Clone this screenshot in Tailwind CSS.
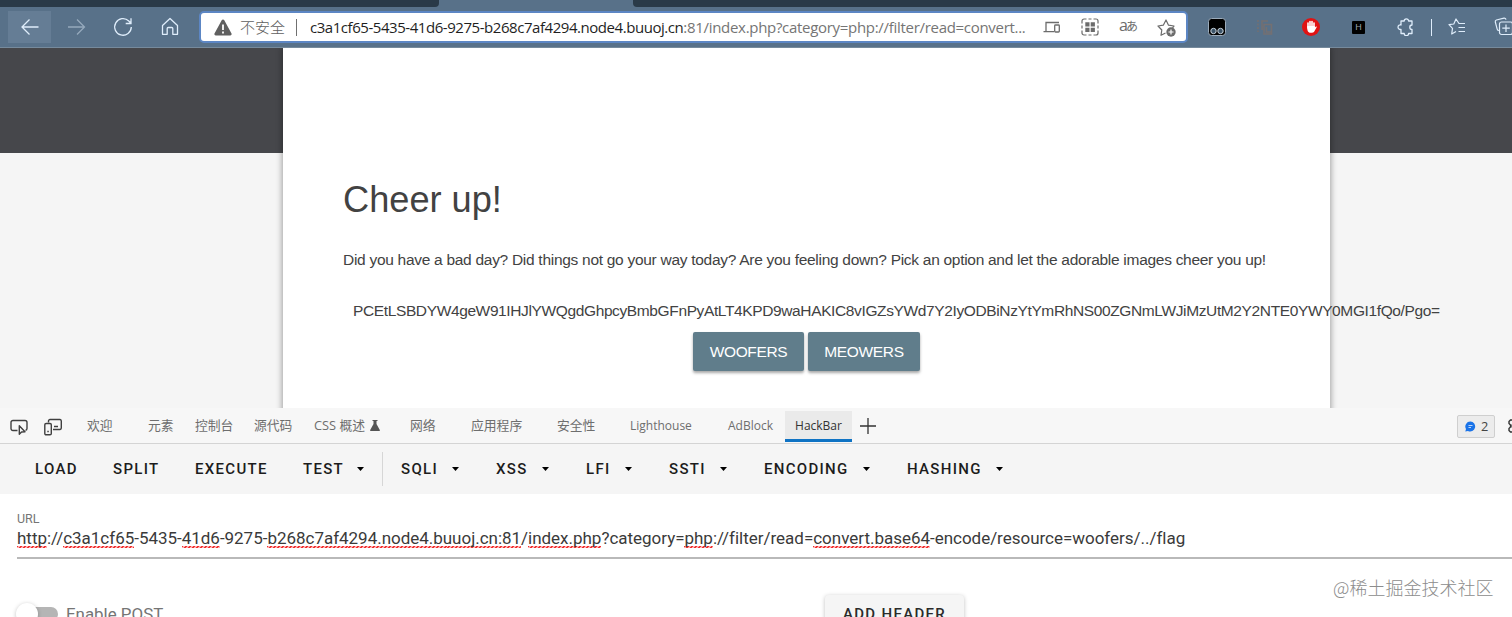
<!DOCTYPE html>
<html lang="zh">
<head>
  <meta charset="UTF-8">
  <meta name="viewport" content="width=device-width, initial-scale=1.0">
  <title>Cheer up!</title>
  <script src="https://cdn.jsdelivr.net/npm/@tailwindcss/browser@4"></script>
</head>
<body class="w-[1512px] h-[617px] overflow-hidden bg-white flex flex-col whitespace-nowrap font-['Liberation_Sans','Noto_Sans_CJK_SC',sans-serif]">

  <!-- browser tab strip -->
  <div class="h-[7px] shrink-0 flex bg-[#587189]">
    <div class="w-[439px] bg-[#2a3a48] rounded-br"></div>
    <div class="w-[194px]"></div>
    <div class="flex-1 bg-[#2a3a48] rounded-bl"></div>
  </div>

  <!-- browser toolbar -->
  <header class="h-[41px] shrink-0 flex items-center *:shrink-0 bg-[#587189] border-b border-[#768a9c] text-[#dfedfb] overflow-hidden">
    <div class="ml-2 w-[43px] h-8 bg-[#657d95] flex items-center justify-center">
      <svg class="w-5 h-5" viewBox="0 0 20 20" fill="none" stroke="currentColor" stroke-width="1.3"><path d="M18.5 10H2M9.5 2.5L2 10l7.500 7.500"/></svg>
    </div>
    <svg class="ml-[16px] w-5 h-5 opacity-45" viewBox="0 0 20 20" fill="none" stroke="currentColor" stroke-width="1.3"><path d="M1 10h16.500M10 2.500l7.500 7.500L10 17.500"/></svg>
    <svg class="ml-[26px] w-5 h-5" viewBox="0 0 20 20" fill="none" stroke="currentColor" stroke-width="1.3"><path d="M18.300 10A8.300 8.300 0 1 1 15.800 4L18 6.300M18 1.200v5.300h-5.300"/></svg>
    <svg class="ml-[27px] w-5 h-5" viewBox="0 0 20 20" fill="none" stroke="currentColor" stroke-width="1.3" stroke-linejoin="round"><path d="M2.500 8.500L10 1.500l7.500 7V17.300h-4.700V11.500a1 1 0 0 0-1-1H8.200a1 1 0 0 0-1 1v5.800H2.500z"/></svg>

    <div class="ml-[19px] w-[989px] h-8 bg-white border-2 border-[#5c86c4] rounded-[5px] flex items-center *:shrink-0 font-['Open_Sans','Noto_Sans_CJK_SC',sans-serif]">
      <svg class="ml-[13px] w-[18px] h-[17px] text-[#606060]" viewBox="0 0 18 17"><path fill="currentColor" d="M7.700 1.200a1.500 1.500 0 0 1 2.600 0l7.200 13.300a1.400 1.400 0 0 1-1.300 2H1.800a1.400 1.400 0 0 1-1.300-2z"/><path stroke="#fff" stroke-width="1.800" d="M9 5.500v5.500M9 12.500v2"/></svg>
      <span class="ml-2 w-[46px] text-[15px] font-light text-[#606060]">不安全</span>
      <span class="ml-[10px] w-px h-[17px] bg-[#707070]"></span>
      <span class="ml-[13px] w-[719px] text-[15px] tracking-[-0.3px] text-[#757575]"><span class="tracking-[-0.45px] text-[#1f1f1f]">c3a1cf65-5435-41d6-9275-b268c7af4294.node4.buuoj.cn</span>:81/index.php?category=php://filter/read=convert...</span>
      <svg class="ml-[14px] w-[18px] h-4 text-[#6c6c6c]" viewBox="0 0 18 16" fill="none" stroke="currentColor" stroke-width="1.300"><path d="M3 12V3.500h13M0.500 12.700h10.500"/><rect x="11.700" y="6" width="4.600" height="7" rx=".8"/></svg>
      <svg class="ml-5 w-[18px] h-[18px] text-[#6c6c6c]" viewBox="0 0 18 18" fill="none" stroke="currentColor" stroke-width="1.200"><path d="M1 5.500V3a2 2 0 0 1 2-2h2.500M12.500 1H15a2 2 0 0 1 2 2v2.500M17 12.500V15a2 2 0 0 1-2 2h-2.500M5.500 17H3a2 2 0 0 1-2-2v-2.500M7.500 1h3M7.500 17h3M1 7.500v3M17 7.500v3"/><path fill="currentColor" stroke="none" d="M4.300 4.300h4.200v4.200H4.300zM9.700 4.300h4.200v4.200H9.700zM4.300 9.700h4.200v4.200H4.300zM9.700 9.700h4.200v4.200H9.700z"/></svg>
      <span class="ml-5 w-5 flex items-center text-[#6c6c6c]"><span class="text-[16px] leading-4 pb-1">a</span><span class="text-[12px] leading-4 -ml-0.5">あ</span></span>
      <svg class="ml-[18px] w-[19px] h-[19px] text-[#6c6c6c]" viewBox="0 0 19 19" fill="none" stroke="currentColor" stroke-width="1.200" stroke-linejoin="round"><path d="M8.500 15L4 17.300l.8-5.300L1 8l5.300-.8L9 2l2.500 5.200L17 8l-1.500 1.800"/><circle cx="14" cy="14" r="4.700" fill="currentColor" stroke="none"/><path stroke="#fff" d="M14 11.500v5M11.500 14h5"/></svg>
    </div>

    <svg class="ml-[20px] w-[18px] h-[18px]" viewBox="0 0 18 18"><rect x=".5" y=".5" width="17" height="17" rx="3" fill="#000" stroke="#9babba"/><g fill="#3c5468" stroke="#c9d3dc"><circle cx="5.500" cy="13" r="2.700"/><circle cx="12.500" cy="13" r="2.700"/></g></svg>
    <svg class="ml-[30px] w-[18px] h-[18px]" viewBox="0 0 18 18" fill="none" stroke="#747072" stroke-width="1.600"><path d="M2 2v12" stroke-dasharray="2 1.500"/><path d="M6 12V3h6M8 6.500h7.500V16H8zM10.500 9v5h5"/></svg>
    <svg class="ml-[28px] w-[18px] h-[18px]" viewBox="0 0 18 18"><circle cx="9" cy="9" r="9" fill="#e01212"/><path d="M6 10V5M8 9V3.500M10 9V3.500M12 10V5" stroke="#fff" stroke-width="1.600" stroke-linecap="round"/><path fill="#fff" d="M5.200 8h7.600v1.500l1.400-1.300.6.800-2.800 5c-.8 1-4.500 1.200-5.600 0-1-1.200-1.300-3-1.200-6z"/></svg>
    <span class="ml-[32px] w-[13px] h-[13px] bg-black rounded-[1px] text-[#9aa3ab] text-[9px] leading-[13px] text-center">H</span>
    <svg class="ml-[32px] w-[18px] h-[18px]" viewBox="0 0 18 18" fill="none" stroke="currentColor" stroke-width="1.300" stroke-linejoin="round"><path d="M4 3h3.200a2.200 2.200 0 0 1 4.400 0H15v4a2 2 0 0 0 0 4.400V15.500h-3.400a2.200 2.200 0 0 1-4.400 0H4v-4.100a2.300 2.300 0 1 1 0-4.400z"/></svg>
    <span class="ml-[16px] w-px h-[17px] bg-[#dfedfb]"></span>
    <svg class="ml-[16px] w-[18px] h-[18px]" viewBox="0 0 18 18" fill="none" stroke="currentColor" stroke-width="1.200" stroke-linejoin="round"><path d="M17 5.500h-6L8 1 5.800 6 1 6.700l3.500 3.600-.8 5.700L8 13.500M10.500 9.500H17M10.500 13.500H17"/></svg>
    <svg class="ml-[28px] w-5 h-5" viewBox="0 0 20 20" fill="none" stroke="currentColor" stroke-width="1.200" stroke-linejoin="round"><path d="M5 13.500c-1 0-1.600-.5-1.800-1.400L1.300 5c-.2-1 .2-1.700 1.100-2L10 1.200c1-.2 1.800.3 2 1.500"/><rect x="5.500" y="5" width="13" height="12.500" rx="2"/><path d="M12 7.500v7.500M8.300 11.200h7.500"/></svg>
  </header>

  <!-- page -->
  <main class="h-[360px] shrink-0 overflow-hidden bg-[linear-gradient(#46474b_105px,#f5f5f5_105px)] text-[#424242]">
    <div class="ml-[283px] w-[1047px] h-[400px] bg-white shadow-[0_0_6px_1px_rgba(0,0,0,0.35)] pl-[60px]">
      <h1 class="pt-[129px] text-[36.2px] leading-[46px]">Cheer up!</h1>
      <p class="mt-[25px] text-[15.5px] leading-6 tracking-[-0.285px]">Did you have a bad day? Did things not go your way today? Are you feeling down? Pick an option and let the adorable images cheer you up!</p>
      <p class="mt-[27px] ml-[10px] text-[15.5px] leading-6 tracking-[-0.375px]">PCEtLSBDYW4geW91IHJlYWQgdGhpcyBmbGFnPyAtLT4KPD9waHAKIC8vIGZsYWd7Y2IyODBiNzYtYmRhNS00ZGNmLWJiMzUtM2Y2NTE0YWY0MGI1fQo/Pgo=</p>
      <div class="mt-[9px] ml-[350px] flex gap-1 text-white text-[15.5px] tracking-[-0.35px]">
        <button class="w-[111px] h-[39px] bg-[#607d8b] rounded-[2px] shadow-[0_2px_3px_rgba(0,0,0,0.35)]">WOOFERS</button>
        <button class="w-[112px] h-[39px] bg-[#607d8b] rounded-[2px] shadow-[0_2px_3px_rgba(0,0,0,0.35)]">MEOWERS</button>
      </div>
    </div>
  </main>

  <!-- devtools tabs -->
  <nav class="h-[36px] shrink-0 flex items-center *:shrink-0 bg-[#f7f7f7] border-b border-[#d4d4d4] text-[12.8px] text-[#6e6e6e] overflow-hidden font-['Open_Sans','Noto_Sans_CJK_SC',sans-serif]">
    <svg class="ml-[10px] mt-0.5 w-[18px] h-[18px]" viewBox="0 0 18 18" fill="none" stroke="#404040" stroke-width="1.400"><path d="M7.500 12.500H3A2 2 0 0 1 1 10.500v-6a2 2 0 0 1 2-2h12a2 2 0 0 1 2 2v6a2 2 0 0 1-1.500 1.900"/><path d="M9.300 7.800v8.400l2.200-2.200 3.500-.2z" stroke-linejoin="round"/></svg>
    <svg class="ml-4 mt-0.5 w-[18px] h-[18px]" viewBox="0 0 18 18" fill="none" stroke="#404040" stroke-width="1.400"><path d="M4.500 4.500V3a1.500 1.500 0 0 1 1.500-1.500h10A1.500 1.500 0 0 1 17.300 3v7A1.500 1.500 0 0 1 16 11.500H9M10 8.500h4"/><rect x=".8" y="5.500" width="6.500" height="11.300" rx="1.300"/><path d="M3.300 13.500h1.500"/></svg>
    <span class="ml-[25px] w-[61px]">欢迎</span>
    <span class="w-[47px]">元素</span>
    <span class="w-[59px]">控制台</span>
    <span class="w-[60px]">源代码</span>
    <span class="w-[96px] flex items-center">CSS 概述<svg class="ml-[5px] w-[10px] h-[11px]" viewBox="0 0 10 11"><path fill="#555" d="M2.500 0h5v1H6.500v3L9.800 10v1H.2v-1L3.500 4V1h-1z"/></svg></span>
    <span class="w-[61px]">网络</span>
    <span class="w-[86px]">应用程序</span>
    <span class="w-[73px]">安全性</span>
    <span class="mt-px w-[98px] text-[12px]">Lighthouse</span>
    <span class="mt-px w-[57px] text-[12px]">AdBlock</span>
    <span class="mt-[1px] w-[67px] h-[31px] leading-[30px] text-[12px] text-center text-[#333] bg-[#eaeaea] border-b-3 border-[#0f73c4]">HackBar</span>
    <svg class="ml-2 w-4 h-4" viewBox="0 0 16 16" stroke="#333" stroke-width="1.300"><path d="M8 0v16M0 8h16"/></svg>
    <div class="ml-[581px] mt-0.5 w-[38px] h-[23px] bg-[#ececec] border border-[#cfcfcf] rounded-[2px] flex items-center text-[#444]">
      <svg class="ml-[7px] w-[11px] h-[11px]" viewBox="0 0 11 11"><path fill="#1a73e8" d="M5.500.5A5 5 0 1 1 3 10L.3 10.500 1 8A5 5 0 0 1 5.500.5z"/><path stroke="#bcd6fa" d="M3.500 4.500h4M3.500 6.500h2.500"/></svg>
      <span class="ml-[5px]">2</span>
    </div>
    <svg class="ml-[12px] w-[14px] h-[14px]" viewBox="0 0 14 14" fill="none" stroke="#333" stroke-width="1.400"><path d="M7 1H3.500L2 2.500v2L3.500 6v2L2 9.500v2L3.500 13H7"/><circle cx="7" cy="7" r="2"/></svg>
  </nav>

  <!-- hackbar menu -->
  <div class="h-[50px] shrink-0 flex items-center *:shrink-0 bg-[#f5f5f5] text-[#1c1c1c] text-[15px] font-medium tracking-[1.3px] font-['Roboto',sans-serif]">
    <span class="ml-[35px] w-[78px]">LOAD</span>
    <span class="w-[82px]">SPLIT</span>
    <span class="w-[108px]">EXECUTE</span>
    <span class="w-[54px]">TEST</span>
    <svg class="w-[7px] h-1 mr-[18px]" viewBox="0 0 7 4"><path d="M0 0h7L3.500 4z"/></svg>
    <span class="w-px h-[34px] bg-[#d6d6d6]"></span>
    <span class="ml-[18px] w-[51px]">SQLI</span>
    <svg class="w-[7px] h-1 mr-[37px]" viewBox="0 0 7 4"><path d="M0 0h7L3.500 4z"/></svg>
    <span class="w-[46px]">XSS</span>
    <svg class="w-[7px] h-1 mr-[37px]" viewBox="0 0 7 4"><path d="M0 0h7L3.500 4z"/></svg>
    <span class="w-[39px]">LFI</span>
    <svg class="w-[7px] h-1 mr-[37px]" viewBox="0 0 7 4"><path d="M0 0h7L3.500 4z"/></svg>
    <span class="w-[51px]">SSTI</span>
    <svg class="w-[7px] h-1 mr-[37px]" viewBox="0 0 7 4"><path d="M0 0h7L3.500 4z"/></svg>
    <span class="w-[99px]">ENCODING</span>
    <svg class="w-[7px] h-1 mr-[37px]" viewBox="0 0 7 4"><path d="M0 0h7L3.500 4z"/></svg>
    <span class="w-[89px]">HASHING</span>
    <svg class="w-[7px] h-1" viewBox="0 0 7 4"><path d="M0 0h7L3.500 4z"/></svg>
  </div>

  <!-- request form -->
  <section class="relative flex-1 overflow-hidden pl-[17px] bg-white font-['Roboto',sans-serif]">
    <label class="block pt-[17px] text-[12.5px] leading-4 text-[#757575]">URL</label>
    <!-- misspelled parts get a red zigzag along their bottom edge -->
    <div class="h-[32px] border-b-2 border-[#b9b9b9] text-[17px] leading-[22px] tracking-[-0.02px] text-[#3a3a3a] [&>u]:no-underline [&>u]:bg-[repeating-linear-gradient(135deg,#f03030_0_1.4px,#ffb0b0_1.4px_2.8px)] [&>u]:bg-[length:100%_2px] [&>u]:bg-bottom [&>u]:bg-no-repeat"><u>http</u>://<u>c3a1cf65</u>-5435-<u>41d6</u>-9275-<u>b268c7af4294.node4.buuoj.cn:81</u>/<u>index.php</u>?category=<u>php</u>://filter/read=<u>convert.base64</u>-encode/resource=woofers/../flag</div>
    <div class="flex mt-[36px]">
      <div class="mt-[12px] w-[41px] h-[14px] rounded-full bg-[#b5b5b5]">
        <div class="-mt-[4px] -ml-[1px] w-[22px] h-[22px] rounded-full bg-white shadow-[0_1px_4px_rgba(0,0,0,0.25)]"></div>
      </div>
      <span class="ml-2 mt-[9px] w-[759px] text-[16.9px] leading-5 text-[#757575]">Enable POST</span>
      <button class="w-[139px] h-[38px] bg-[#f5f5f5] rounded shadow-[0_1px_4px_rgba(0,0,0,0.25)] text-[15px] font-medium tracking-[1.3px] text-[#2b2b2b]">ADD HEADER</button>
    </div>
    <div class="absolute left-[1333px] top-[81px] text-[18px] leading-6 font-light text-[#8c8c8c] font-['Noto_Sans_CJK_SC',sans-serif]">@稀土掘金技术社区</div>
  </section>
</body>
</html>
